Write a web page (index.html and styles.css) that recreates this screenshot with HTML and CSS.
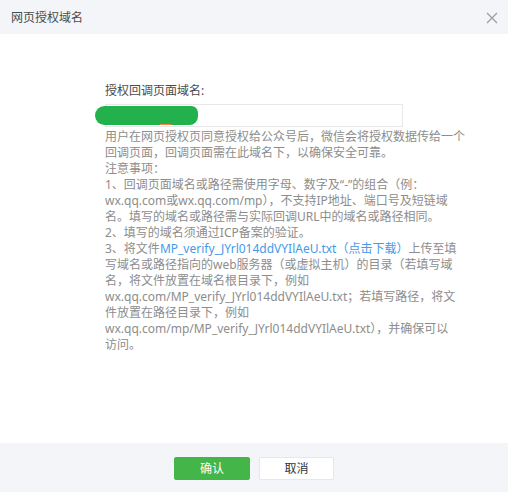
FILE: index.html
```html
<!DOCTYPE html>
<html lang="zh-CN">
<head>
<meta charset="utf-8">
<title>网页授权域名</title>
<link rel="stylesheet" href="styles.css">
</head>
<body>
<div class="dialog">
  <div class="dialog-hd">
    <h3 class="dialog-title">网页授权域名</h3>
    <button class="dialog-close" aria-label="关闭">
      <svg width="12" height="12" viewBox="0 0 12 12"><path d="M1 1L11 11M11 1L1 11" stroke="#a0a0a0" stroke-width="1.4" fill="none"/></svg>
    </button>
  </div>
  <div class="dialog-bd">
    <div class="form">
      <label class="form-label">授权回调页面域名:</label>
      <div class="input-box">
        <input class="input" type="text" value="">
        <span class="mask"></span>
        <span class="mask-line"></span>
      </div>
      <p class="tips">用户在网页授权页同意授权给公众号后，微信会将授权数据传给一个<br>回调页面，回调页面需在此域名下，以确保安全可靠。<br>注意事项：<br>1、回调页面域名或路径需使用字母、数字及“-”的组合（例：<br>wx.qq.com或wx.qq.com/mp），不支持IP地址、端口号及短链域<br>名。填写的域名或路径需与实际回调URL中的域名或路径相同。<br>2、填写的域名须通过ICP备案的验证。<br>3、将文件<a class="link" href="#">MP_verify_JYrl014ddVYIlAeU.txt（点击下载）</a>上传至填<br>写域名或路径指向的web服务器（或虚拟主机）的目录（若填写域<br>名，将文件放置在域名根目录下，例如<br>wx.qq.com/MP_verify_JYrl014ddVYIlAeU.txt；若填写路径，将文<br>件放置在路径目录下，例如<br>wx.qq.com/mp/MP_verify_JYrl014ddVYIlAeU.txt），并确保可以<br>访问。</p>
    </div>
  </div>
  <div class="dialog-ft">
    <button class="btn btn-primary">确认</button>
    <button class="btn btn-default">取消</button>
  </div>
</div>
</body>
</html>
```

FILE: styles.css
```css
* { box-sizing: border-box; }
html, body {
  margin: 0;
  padding: 0;
  background: #fff;
}
body {
  width: 508px;
  height: 492px;
  font-family: "Noto Sans", "Noto Sans CJK SC", sans-serif;
  font-size: 12px;
  color: #444;
}
.dialog {
  width: 508px;
  height: 492px;
  display: flex;
  flex-direction: column;
}
.dialog-hd {
  height: 34px;
  flex: none;
  background: #f4f5f9;
  display: flex;
  align-items: center;
  justify-content: space-between;
  padding: 0 10px 0 11px;
}
.dialog-title {
  margin: 0;
  font-size: 12px;
  font-weight: normal;
  color: #4a4a4a;
}
.dialog-close {
  border: 0;
  background: none;
  padding: 0;
  width: 12px;
  height: 12px;
  display: flex;
  margin-top: 2px;
}
.dialog-bd {
  flex: 1;
  padding: 49px 0 0 105px;
}
.form-label {
  display: block;
  line-height: 16px;
  font-weight: normal;
  color: #4a4a4a;
  margin-bottom: 5px;
}
.input-box {
  position: relative;
  width: 298px;
  height: 23px;
  margin-bottom: 2px;
}
.input {
  width: 100%;
  height: 100%;
  border: 1px solid #e7e7eb;
  background: #fff;
  outline: none;
  padding: 0 6px;
}
.mask {
  position: absolute;
  left: -10px;
  top: 2px;
  width: 103px;
  height: 19px;
  background: #22b14c;
  border-radius: 10px 7px 9px 10px;
}
.mask-line {
  position: absolute;
  left: 55px;
  top: 20px;
  width: 11px;
  height: 1px;
  background: #f08a4b;
}
.tips {
  margin: 0;
  line-height: 16px;
  color: #8d8d8d;
  white-space: nowrap;
}
.link {
  color: #459ae9;
  text-decoration: none;
}
.dialog-ft {
  height: 49px;
  flex: none;
  background: #f4f5f9;
  display: flex;
  justify-content: center;
  align-items: flex-start;
  padding-top: 14px;
  gap: 9px;
}
.btn {
  width: 76px;
  height: 23px;
  font-family: inherit;
  font-size: 12px;
  border-radius: 2px;
  padding: 0;
  line-height: 21px;
}
.btn-primary {
  background: #44b549;
  border: 1px solid #44b549;
  color: #fff;
}
.btn-default {
  width: 75px;
  background: #fff;
  border: 1px solid #e4e8eb;
  color: #333;
}
```
